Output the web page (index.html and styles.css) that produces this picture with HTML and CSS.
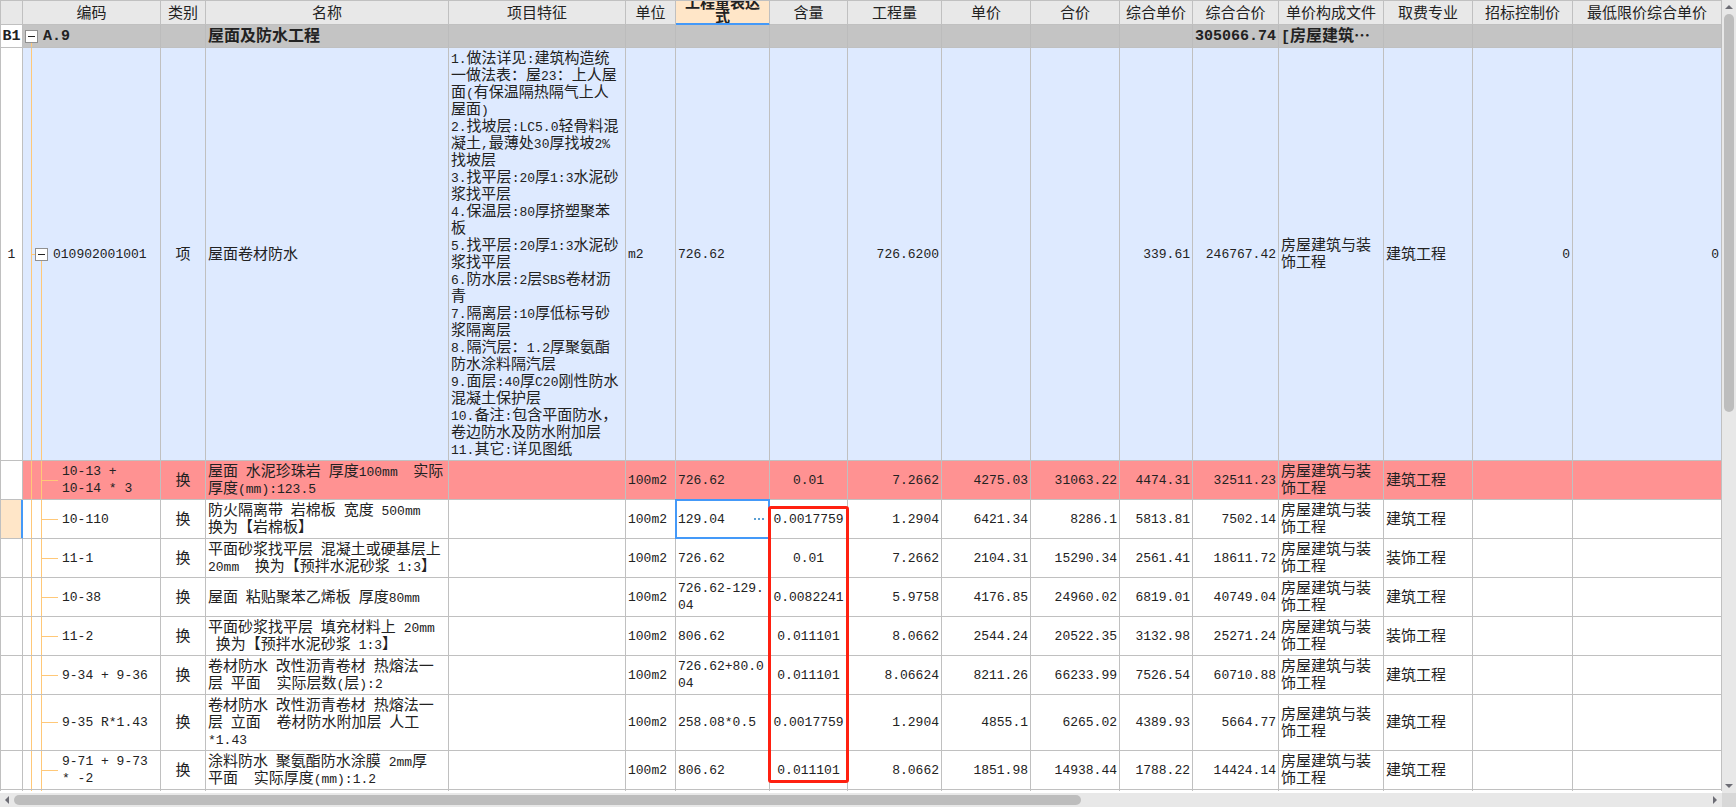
FILE: index.html
```html
<!DOCTYPE html>
<html lang="zh-CN">
<head>
<meta charset="utf-8">
<title>分部分项清单</title>
<link rel="stylesheet" href="styles.css">
</head>
<body>
<main class="sheet">
<div class="grid-area">
<table class="grid">
<colgroup>
<col class="w-idx"><col class="w-code"><col class="w-type"><col class="w-name"><col class="w-feature"><col class="w-unit"><col class="w-expr"><col class="w-ratio"><col class="w-qty"><col class="w-price"><col class="w-price"><col class="w-cprice"><col class="w-ctotal"><col class="w-file"><col class="w-major"><col class="w-limit"><col class="w-lowest">
</colgroup>
<thead>
<tr>
<th></th><th scope="col">编码</th><th scope="col">类别</th><th scope="col">名称</th><th scope="col">项目特征</th><th scope="col">单位</th><th scope="col" class="current"><div class="clip"><span>工程量表达<br>式</span></div></th><th scope="col">含量</th><th scope="col">工程量</th><th scope="col">单价</th><th scope="col">合价</th><th scope="col">综合单价</th><th scope="col">综合合价</th><th scope="col">单价构成文件</th><th scope="col">取费专业</th><th scope="col">招标控制价</th><th scope="col">最低限价综合单价</th>
</tr>
</thead>
<tbody>
<tr class="section">
<th scope="row" class="idx">B1</th>
<td class="code lv0"><div class="node"><button type="button" class="toggle" aria-label="折叠 A.9"></button><span>A.9</span></div></td>
<td></td><td class="name">屋面及防水工程</td><td></td><td></td><td></td><td></td><td></td><td></td><td></td><td></td><td class="num">305066.74</td><td><i>[</i>房屋建筑…</td><td></td><td></td><td></td>
</tr>
<tr class="item">
<th scope="row" class="idx">1</th>
<td class="code lv1"><div class="node"><button type="button" class="toggle" aria-label="折叠 010902001001"></button><span>010902001001</span></div></td>
<td class="mid">项</td><td class="name">屋面卷材防水</td>
<td class="feature"><i>1.</i>做法详见<i>:</i>建筑构造统<br>一做法表：屋<i>23</i>：上人屋<br>面<i>(</i>有保温隔热隔气上人<br>屋面<i>)</i><br><i>2.</i>找坡层<i>:LC5.0</i>轻骨料混<br>凝土<i>,</i>最薄处<i>30</i>厚找坡<i>2%</i><br>找坡层<br><i>3.</i>找平层<i>:20</i>厚<i>1:3</i>水泥砂<br>浆找平层<br><i>4.</i>保温层<i>:80</i>厚挤塑聚苯<br>板<br><i>5.</i>找平层<i>:20</i>厚<i>1:3</i>水泥砂<br>浆找平层<br><i>6.</i>防水层<i>:2</i>层<i>SBS</i>卷材沥<br>青<br><i>7.</i>隔离层<i>:10</i>厚低标号砂<br>浆隔离层<br><i>8.</i>隔汽层：<i>1.2</i>厚聚氨酯<br>防水涂料隔汽层<br><i>9.</i>面层<i>:40</i>厚<i>C20</i>刚性防水<br>混凝土保护层<br><i>10.</i>备注<i>:</i>包含平面防水，<br>卷边防水及防水附加层<br><i>11.</i>其它<i>:</i>详见图纸</td>
<td class="lat">m2</td><td class="lat">726.62</td><td class="ratio"></td><td class="num">726.6200</td><td class="num"></td><td class="num"></td><td class="num">339.61</td><td class="num">246767.42</td><td>房屋建筑与装<br>饰工程</td><td>建筑工程</td><td class="num">0</td><td class="num">0</td>
</tr>
<tr class="warn">
<th scope="row" class="idx"></th><td class="code lv2">10-13 +<br>10-14 * 3</td><td class="mid">换</td><td class="name">屋面<i> </i>水泥珍珠岩<i> </i>厚度<i>100mm  </i>实际<br>厚度<i>(mm):123.5</i></td><td></td><td class="lat">100m2</td><td class="lat">726.62</td><td class="ratio">0.01</td><td class="num">7.2662</td><td class="num">4275.03</td><td class="num">31063.22</td><td class="num">4474.31</td><td class="num">32511.23</td><td>房屋建筑与装<br>饰工程</td><td>建筑工程</td><td></td><td></td>
</tr>
<tr>
<th scope="row" class="idx current"></th><td class="code lv2">10-110</td><td class="mid">换</td><td class="name">防火隔离带<i> </i>岩棉板<i> </i>宽度<i> 500mm</i><br>换为【岩棉板】</td><td></td><td class="lat">100m2</td><td class="lat editing"><div class="editor"><input type="text" value="129.04" aria-label="工程量表达式"><button type="button" class="more" aria-label="更多"><svg width="10" height="2" viewBox="0 0 10 2"><path d="M0 0h2v2H0zM4 0h2v2H4zM8 0h2v2H8z"/></svg></button></div></td><td class="ratio marked">0.0017759<span class="mark"></span></td><td class="num">1.2904</td><td class="num">6421.34</td><td class="num">8286.1</td><td class="num">5813.81</td><td class="num">7502.14</td><td>房屋建筑与装<br>饰工程</td><td>建筑工程</td><td></td><td></td>
</tr>
<tr>
<th scope="row" class="idx"></th><td class="code lv2">11-1</td><td class="mid">换</td><td class="name">平面砂浆找平层<i> </i>混凝土或硬基层上<br><i>20mm  </i>换为【预拌水泥砂浆<i> 1:3</i>】</td><td></td><td class="lat">100m2</td><td class="lat">726.62</td><td class="ratio">0.01</td><td class="num">7.2662</td><td class="num">2104.31</td><td class="num">15290.34</td><td class="num">2561.41</td><td class="num">18611.72</td><td>房屋建筑与装<br>饰工程</td><td>装饰工程</td><td></td><td></td>
</tr>
<tr>
<th scope="row" class="idx"></th><td class="code lv2">10-38</td><td class="mid">换</td><td class="name">屋面<i> </i>粘贴聚苯乙烯板<i> </i>厚度<i>80mm</i></td><td></td><td class="lat">100m2</td><td class="lat">726.62-129.<br>04</td><td class="ratio">0.0082241</td><td class="num">5.9758</td><td class="num">4176.85</td><td class="num">24960.02</td><td class="num">6819.01</td><td class="num">40749.04</td><td>房屋建筑与装<br>饰工程</td><td>建筑工程</td><td></td><td></td>
</tr>
<tr>
<th scope="row" class="idx"></th><td class="code lv2">11-2</td><td class="mid">换</td><td class="name">平面砂浆找平层<i> </i>填充材料上<i> 20mm</i><br><i> </i>换为【预拌水泥砂浆<i> 1:3</i>】</td><td></td><td class="lat">100m2</td><td class="lat">806.62</td><td class="ratio">0.011101</td><td class="num">8.0662</td><td class="num">2544.24</td><td class="num">20522.35</td><td class="num">3132.98</td><td class="num">25271.24</td><td>房屋建筑与装<br>饰工程</td><td>装饰工程</td><td></td><td></td>
</tr>
<tr>
<th scope="row" class="idx"></th><td class="code lv2">9-34 + 9-36</td><td class="mid">换</td><td class="name">卷材防水<i> </i>改性沥青卷材<i> </i>热熔法一<br>层<i> </i>平面<i>  </i>实际层数<i>(</i>层<i>):2</i></td><td></td><td class="lat">100m2</td><td class="lat">726.62+80.0<br>04</td><td class="ratio">0.011101</td><td class="num">8.06624</td><td class="num">8211.26</td><td class="num">66233.99</td><td class="num">7526.54</td><td class="num">60710.88</td><td>房屋建筑与装<br>饰工程</td><td>建筑工程</td><td></td><td></td>
</tr>
<tr>
<th scope="row" class="idx"></th><td class="code lv2">9-35 R*1.43</td><td class="mid">换</td><td class="name">卷材防水<i> </i>改性沥青卷材<i> </i>热熔法一<br>层<i> </i>立面<i>  </i>卷材防水附加层<i> </i>人工<br><i>*1.43</i></td><td></td><td class="lat">100m2</td><td class="lat">258.08*0.5</td><td class="ratio">0.0017759</td><td class="num">1.2904</td><td class="num">4855.1</td><td class="num">6265.02</td><td class="num">4389.93</td><td class="num">5664.77</td><td>房屋建筑与装<br>饰工程</td><td>建筑工程</td><td></td><td></td>
</tr>
<tr>
<th scope="row" class="idx"></th><td class="code lv2">9-71 + 9-73<br>* -2</td><td class="mid">换</td><td class="name">涂料防水<i> </i>聚氨酯防水涂膜<i> 2mm</i>厚<br>平面<i>  </i>实际厚度<i>(mm):1.2</i></td><td></td><td class="lat">100m2</td><td class="lat">806.62</td><td class="ratio">0.011101</td><td class="num">8.0662</td><td class="num">1851.98</td><td class="num">14938.44</td><td class="num">1788.22</td><td class="num">14424.14</td><td>房屋建筑与装<br>饰工程</td><td>建筑工程</td><td></td><td></td>
</tr>
<tr class="tail">
<th class="idx"></th><td class="code lv-tail"></td><td></td><td></td><td></td><td></td><td></td><td></td><td></td><td></td><td></td><td></td><td></td><td></td><td></td><td></td><td></td>
</tr>
</tbody>
</table>
</div>
<div class="bar vertical">
<button type="button" aria-label="向上滚动"><svg width="8" height="4" viewBox="0 0 8 4"><path d="M4 0l4 4H0z"/></svg></button>
<div class="track"><div class="thumb"></div></div>
<button type="button" aria-label="向下滚动"><svg width="8" height="4" viewBox="0 0 8 4"><path d="M0 0h8L4 4z"/></svg></button>
</div>
<div class="bar horizontal">
<button type="button" aria-label="向左滚动"><svg width="4" height="8" viewBox="0 0 4 8"><path d="M4 0v8L0 4z"/></svg></button>
<div class="track"><div class="thumb"></div></div>
<button type="button" aria-label="向右滚动"><svg width="4" height="8" viewBox="0 0 4 8"><path d="M0 0l4 4-4 4z"/></svg></button>
</div>
<div class="corner"></div>
</main>
</body>
</html>
```
FILE: styles.css
```css
* { box-sizing: border-box; }

:root {
  --line: #c0c0c0;
  --branch: #ffc878;
  --accent: #4499f8;
  --mono: "Liberation Mono", "Noto Sans CJK SC", monospace;
}

body {
  margin: 0;
  color: #222;
  background: #fff;
  font: 15px/17px "Noto Sans CJK SC", sans-serif;
}

button {
  padding: 0;
  border: 0;
  background: none;
}

.sheet {
  display: grid;
  grid-template-columns: minmax(0, 1fr) 14px;
  grid-template-rows: minmax(0, 1fr) 14px;
  height: 100vh;
}

.grid-area {
  overflow: hidden;
  border-bottom: 2px solid #fff;
}

/* grid */
.grid {
  width: 100%;
  table-layout: fixed;
  border-collapse: separate;
  border-spacing: 0;
  border: solid var(--line);
  border-width: 1px 0 0 1px;
}

.w-idx { width: 22px; }
.w-code { width: 138px; }
.w-type { width: 45px; }
.w-name { width: 243px; }
.w-feature { width: 177px; }
.w-unit { width: 50px; }
.w-expr { width: 94px; }
.w-ratio { width: 78px; }
.w-qty { width: 94px; }
.w-price { width: 89px; }
.w-cprice { width: 73px; }
.w-ctotal { width: 86px; }
.w-file { width: 105px; }
.w-major { width: 89px; }
.w-limit { width: 100px; }
.w-lowest { width: 149px; }

.grid th,
.grid td {
  padding: 0 2px 4px;
  border: solid var(--line);
  border-width: 0 1px 1px 0;
  vertical-align: middle;
  text-align: left;
  font-weight: 400;
  white-space: pre;
}

.grid thead th {
  height: 24px;
  padding-bottom: 3px;
  text-align: center;
  background: #e8e8e8;
}

.grid thead .current {
  padding: 0;
  font-weight: 700;
  background: #ffe6c8;
  box-shadow: inset 0 -1px var(--accent);
  border-bottom-color: var(--accent);
}

.clip {
  display: flex;
  align-items: flex-end;
  justify-content: center;
  height: 22px;
  margin-bottom: 1px;
  line-height: 14px;
  overflow: hidden;
}

/* latin runs inside Chinese text */
.grid i {
  font: 13px/0 var(--mono);
}

.grid .idx,
.grid .code,
.grid .lat,
.grid .num,
.grid .ratio {
  padding-top: 2px;
  padding-bottom: 2px;
  font-family: var(--mono);
  font-size: 13px;
}

.grid .idx {
  padding: 0;
  text-align: center;
  background: #fff;
}

.grid .idx.current {
  background: #ffe6c8;
  box-shadow: inset -1px 0 var(--accent);
  border-right-color: var(--accent);
}

.grid .num { text-align: right; }
.grid .ratio { text-align: center; padding: 2px 0; }
.grid .mid { text-align: center; }

/* row kinds */
.grid .section td {
  height: 23px;
  background-color: #c4c4c4;
  font-size: 16px;
  font-weight: 700;
}

.grid .section .idx,
.grid .section .code,
.grid .section .num,
.grid .section i {
  font-size: 15px;
  font-weight: 700;
}

.grid .section td { border-right-color: #bcbcbc; }
.grid .item td { background-color: #deeaff; }
.grid .warn td { background-color: #ff9292; }
.grid .tail td { height: 39px; }

/* tree column */
.grid .code {
  background-image: linear-gradient(var(--branch), var(--branch)), linear-gradient(var(--branch), var(--branch)), linear-gradient(var(--branch), var(--branch));
  background-repeat: no-repeat;
}

.grid .lv0 {
  background-position: 8px 100%;
  background-size: 1px 5px, 0 0, 0 0;
}

.grid .lv1 {
  padding-left: 12px;
  background-position: 8px 0, 8px 50%, 18px 100%;
  background-size: 1px 100%, 4px 1px, 1px 50%;
}

.grid .lv2 {
  padding-left: 39px;
  background-position: 8px 0, 18px 0, 18px 50%;
  background-size: 1px 100%, 1px 100%, 17px 1px;
}

.grid .lv-tail {
  background-position: 8px 0, 18px 0, 0 0;
  background-size: 1px 100%, 1px 100%, 0 0;
}

.node {
  display: flex;
  align-items: center;
  gap: 5px;
}

.toggle {
  display: flex;
  align-items: center;
  justify-content: center;
  flex: none;
  width: 13px;
  height: 13px;
  border: 1px solid #909090;
  background: #fff;
}

.toggle::before {
  content: "";
  width: 7px;
  height: 1px;
  background: #222;
}

/* cell being edited */
.grid .editing,
.grid .marked { position: relative; }

.editing::after {
  content: "";
  position: absolute;
  inset: -1px;
  border: 2px solid var(--accent);
  pointer-events: none;
}

.editor {
  display: flex;
  align-items: center;
}

.editor input {
  flex: 1;
  min-width: 0;
  padding: 0;
  border: 0;
  outline: 0;
  color: inherit;
  background: none;
  font: inherit;
}

.more {
  display: flex;
  align-items: center;
  padding: 0 3px;
  height: 17px;
}

.more svg { fill: #5a9fd4; }

/* red frame over the ratio column */
.mark {
  position: absolute;
  z-index: 1;
  top: 6px;
  left: -2px;
  right: -2px;
  height: 277px;
  border: 3px solid #ff2010;
  border-radius: 3px;
  pointer-events: none;
}

/* scroll bars */
.bar {
  display: flex;
  background: #e8e8e8;
}

.bar button {
  display: flex;
  align-items: center;
  justify-content: center;
  flex: none;
  width: 14px;
  height: 14px;
}

.bar svg { fill: #6c6c74; }
.track { flex: 1; }

.thumb {
  border-radius: 5px;
  background: #bdbdbd;
}

.vertical { flex-direction: column; }
.vertical .track { padding: 0 2px; }
.vertical .thumb { height: 52%; }
.horizontal .track { padding: 2px 0; }

.horizontal .thumb {
  width: 63%;
  height: 10px;
}

.corner { background: #d8d8d8; }
```
